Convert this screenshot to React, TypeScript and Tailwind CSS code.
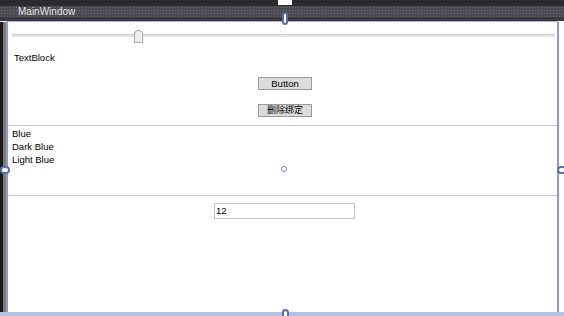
import React from "react";

export default function App() {
  return (
    <div
      className="relative w-[564px] h-[316px] overflow-hidden bg-white flex flex-col"
      style={{ fontFamily: '"Liberation Sans", "Noto Sans CJK SC", sans-serif' }}
    >
      {/* title bar */}
      <div className="h-[21px] shrink-0 bg-[#2f2f33] flex flex-col">
        <div className="h-[6px] bg-[#2b2b2e]" />
        <div className="h-[11px] bg-[#4a4a50] bg-[radial-gradient(#6a6a72_35%,transparent_40%)] bg-[length:3px_3px] flex items-center pl-[18px]">
          <span className="text-[10px] leading-none text-[#e6e6e6]">MainWindow</span>
        </div>
        <div className="flex-1 bg-[#3a3a3e]" />
      </div>
      <div className="h-[1px] bg-[#a8b4d0] ml-[6px] mr-[6px] shrink-0" />

      {/* body */}
      <div className="flex-1 flex">
        <div className="w-[3px] bg-[#1a1a1a]" />
        <div className="w-[3px] bg-[#7a7a7a]" />
        <div className="w-[2px] bg-[#8c9cc8]" />
        <div className="flex-1 flex flex-col">
          <div className="flex-1 flex flex-col">
            {/* slider */}
            <div className="h-[27px] relative flex items-center pl-[4px] pr-[2px]">
              <div className="w-full h-[3px] bg-[#e3e3e3] border-t border-[#d0d0d0]" />
              <div className="absolute left-[126px] top-[8px] w-[9px] h-[13px] bg-[#eeeeee] border border-[#a8a8a8] rounded-t-[4px]" />
            </div>
            <div className="h-[2px]" />
            <div className="pl-[6px] text-[9.5px] leading-[14px] text-black">TextBlock</div>
            <div className="h-[12px]" />
            <div className="flex justify-center">
              <div className="ml-[5px] w-[54px] h-[13px] bg-[#dcdcdc] border border-[#9a9a9a] text-[9.5px] leading-[11px] text-center text-black">
                Button
              </div>
            </div>
            <div className="h-[14px]" />
            <div className="flex justify-center">
              <div className="ml-[5px] w-[54px] h-[13px] bg-[#dcdcdc] border border-[#9a9a9a] text-[9px] leading-[11px] text-center text-black">
                删除绑定
              </div>
            </div>
            <div className="flex-1" />
          </div>
          <div className="h-[1px] bg-[#c8c8c8] mr-[-8px]" />
          <div className="h-[69px] flex flex-col pt-[1px] pl-[4px] text-[9.5px] leading-[13px] text-black relative">
            <div>Blue</div>
            <div>Dark Blue</div>
            <div>Light Blue</div>
            <div className="absolute left-[273px] top-[40px] w-[6px] h-[6px] rounded-full border border-[#6a8ac8]" />
          </div>
          <div className="h-[1px] bg-[#c8c8c8] mr-[-8px]" />
          <div className="h-[116px] pt-[7px] flex justify-center">
            <div className="ml-[4px] w-[141px] h-[16px] border border-[#c4c4c4] text-[9.5px] leading-[14px] pl-[1px] text-black">
              12
            </div>
          </div>
        </div>
        <div className="w-[2px] bg-[#8c9cc8]" />
        <div className="w-[5px] bg-white" />
      </div>
      <div className="h-[4px] shrink-0 bg-[#b4c2e2]" />

      {/* designer handles */}
      <div className="absolute left-[278px] top-0 w-[14px] h-[5px] bg-white" />
      <div className="absolute left-[282px] top-[12px] w-[6px] h-[13px] rounded-full border-2 border-[#5a6ea8] bg-white" />
      <div className="absolute left-[0px] top-[166px] w-[10px] h-[8px] rounded-full border-2 border-[#5a6ea8] bg-white" />
      <div className="absolute left-[557px] top-[166px] w-[10px] h-[8px] rounded-full border-2 border-[#5a6ea8] bg-white" />
      <div className="absolute left-[282px] top-[309px] w-[7px] h-[10px] rounded-full border-2 border-[#5a6ea8] bg-white" />
    </div>
  );
}
